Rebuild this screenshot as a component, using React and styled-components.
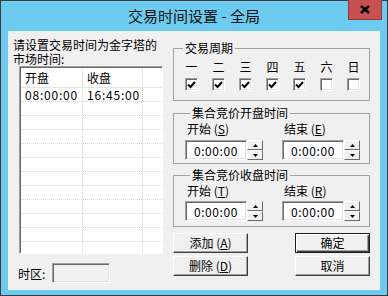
import styled, { createGlobalStyle } from "styled-components";

const GlobalStyle = createGlobalStyle`
  html, body {
    margin: 0;
    padding: 0;
    background: #ffffff;
  }
  body {
    font-family: "Noto Sans CJK SC", "Noto Sans", sans-serif;
    font-size: 12px;
    color: #000;
  }
`;

const Window = styled.div`
  width: 388px;
  height: 296px;
  box-sizing: border-box;
  border: 1px solid #3c3c3c;
  background: #6ccbef;
  display: flex;
  flex-direction: column;
`;

const TitleBar = styled.div`
  height: 30px;
  flex: none;
  display: grid;
  grid-template-columns: 1fr auto 1fr;
  align-items: start;
`;

const Title = styled.div`
  grid-column: 2;
  font-size: 15px;
  line-height: 29px;
  color: #111;
  white-space: nowrap;
`;

const CloseButton = styled.div`
  grid-column: 3;
  justify-self: end;
  width: 34px;
  height: 20px;
  margin: -1px 5px 0 0;
  box-sizing: border-box;
  background: #c75050;
  border: 1px solid #8f3c3c;
  border-top: none;
  display: flex;
  align-items: center;
  justify-content: center;
`;

const Client = styled.div`
  flex: 1;
  margin: 0 7px 5px 7px;
  background: #f0f0f0;
  display: flex;
`;

const LeftColumn = styled.div`
  width: 165px;
  display: flex;
  flex-direction: column;
`;

const Prompt = styled.div`
  margin: 7px 0 0 5px;
  line-height: 14px;
  height: 28px;
`;

const ListView = styled.div`
  margin: 0 0 0 11px;
  width: 144px;
  height: 188px;
  box-sizing: border-box;
  background: #fff;
  border: 1px solid;
  border-color: #a0a0a0 #ffffff #ffffff #a0a0a0;
  box-shadow: inset 1px 1px 0 #696969;
  overflow: hidden;
  padding: 1px 0 0 1px;
`;

const Row = styled.div`
  display: grid;
  grid-template-columns: 62px 60px 1fr;
  height: ${({ $header }) => ($header ? "19px" : "13px")};
  border-bottom: 1px ${({ $header }) => ($header ? "solid #e5e5e5" : "dotted #d6d6d6")};
`;

const Cell = styled.div`
  padding-left: 4px;
  line-height: ${({ $header }) => ($header ? "19px" : "13px")};
  letter-spacing: ${({ $header }) => ($header ? "0" : "0.8px")};
  border-right: 1px ${({ $header }) => ($header ? "solid #e5e5e5" : "dotted #d6d6d6")};
  white-space: nowrap;
  &:last-child {
    border-right: none;
  }
`;

const ZoneRow = styled.div`
  display: flex;
  align-items: center;
  margin: 9px 0 0 10px;
  gap: 7px;
`;

const SunkenBox = styled.div`
  box-sizing: border-box;
  width: ${({ $w }) => $w}px;
  height: 20px;
  background: ${({ $disabled }) => ($disabled ? "#f0f0f0" : "#fff")};
  border: 1px solid;
  border-color: #a0a0a0 #ffffff #ffffff #a0a0a0;
  box-shadow: inset 1px 1px 0 #696969, inset -1px -1px 0 #e3e3e3;
  display: flex;
  align-items: center;
  justify-content: center;
  letter-spacing: 0.6px;
`;

const RightColumn = styled.div`
  width: 197px;
  padding-top: 10px;
  display: flex;
  flex-direction: column;
`;

const Group = styled.fieldset`
  margin: ${({ $gap }) => $gap}px 0 0 0;
  padding: 0 0 0 ${({ $pad }) => $pad}px;
  height: ${({ $h }) => $h}px;
  box-sizing: border-box;
  border: 1px solid #a0a0a0;
  min-width: 0;
`;

const Legend = styled.legend`
  margin-left: 5px;
  padding: 0 2px;
  line-height: 14px;
  font-size: 12px;
`;

const Weekdays = styled.div`
  display: grid;
  grid-template-columns: repeat(7, 27px);
  row-gap: 4px;
  margin-top: 5px;
  justify-items: center;
`;

const DayLabel = styled.span`
  line-height: 14px;
`;

const CheckBox = styled.span`
  box-sizing: border-box;
  width: 13px;
  height: 13px;
  background: #fff;
  border: 1px solid;
  border-color: #a0a0a0 #ffffff #ffffff #a0a0a0;
  box-shadow: inset 1px 1px 0 #696969, inset -1px -1px 0 #e3e3e3;
  display: flex;
  align-items: center;
  justify-content: center;
`;

const TimeGrid = styled.div`
  display: grid;
  grid-template-columns: 97px 97px;
  row-gap: ${({ $gap }) => $gap}px;
`;

const FieldLabel = styled.span`
  line-height: 14px;
  padding-left: 2px;
  white-space: nowrap;
`;

const TimeField = styled.div`
  display: flex;
`;

const Spinner = styled.div`
  display: flex;
  flex-direction: column;
  width: 16px;
  height: 20px;
`;

const SpinHalf = styled.div`
  flex: 1;
  box-sizing: border-box;
  background: #f0f0f0;
  border: 1px solid;
  border-color: #ffffff #696969 #696969 #ffffff;
  display: flex;
  align-items: center;
  justify-content: center;
`;

const ButtonGrid = styled.div`
  display: grid;
  grid-template-columns: 75px 75px;
  justify-content: space-between;
  grid-template-rows: 20px 20px;
  row-gap: 3px;
  margin-top: 6px;
`;

const Button = styled.div`
  box-sizing: border-box;
  background: #f0f0f0;
  border: 1px solid;
  border-color: ${({ $default }) =>
    $default ? "#1e1e1e" : "#ffffff #404040 #404040 #ffffff"};
  box-shadow: ${({ $default }) =>
    $default
      ? "inset 1px 1px 0 #ffffff, inset -1px -1px 0 #404040, inset -2px -2px 0 #a0a0a0"
      : "inset -1px -1px 0 #a0a0a0"};
  display: flex;
  align-items: center;
  justify-content: center;
  line-height: 18px;
  white-space: nowrap;
`;

const Check = () => (
  <svg width="9" height="8" viewBox="0 0 9 8">
    <path d="M1 3.5 L3.5 6 L8 1" fill="none" stroke="#000" strokeWidth="2" />
  </svg>
);

const Arrow = ({ up }) => (
  <svg width="5" height="3" viewBox="0 0 5 3">
    <path d={up ? "M2.5 0 L5 3 L0 3 Z" : "M0 0 L5 0 L2.5 3 Z"} fill="#000" />
  </svg>
);

const Time = ({ label, hot }) => (
  <div>
    <FieldLabel>
      {label} (<u>{hot}</u>)
    </FieldLabel>
  </div>
);

const TimeInput = () => (
  <TimeField>
    <SunkenBox $w={62}>0:00:00</SunkenBox>
    <Spinner>
      <SpinHalf>
        <Arrow up />
      </SpinHalf>
      <SpinHalf>
        <Arrow />
      </SpinHalf>
    </Spinner>
  </TimeField>
);

const days = [
  ["一", true],
  ["二", true],
  ["三", true],
  ["四", true],
  ["五", true],
  ["六", false],
  ["日", false],
];

const emptyRows = Array.from({ length: 12 });

export default function App() {
  return (
    <>
      <GlobalStyle />
      <Window>
        <TitleBar>
          <Title>交易时间设置 - 全局</Title>
          <CloseButton>
            <svg width="10" height="9" viewBox="0 0 10 9">
              <path d="M1 1 L9 8 M9 1 L1 8" stroke="#000" strokeWidth="2.4" />
            </svg>
          </CloseButton>
        </TitleBar>
        <Client>
          <LeftColumn>
            <Prompt>
              请设置交易时间为金字塔的
              <br />
              市场时间:
            </Prompt>
            <ListView>
              <Row $header>
                <Cell $header>开盘</Cell>
                <Cell $header>收盘</Cell>
                <Cell $header />
              </Row>
              <Row>
                <Cell>08:00:00</Cell>
                <Cell>16:45:00</Cell>
                <Cell />
              </Row>
              {emptyRows.map((_, i) => (
                <Row key={i}>
                  <Cell />
                  <Cell />
                  <Cell />
                </Row>
              ))}
            </ListView>
            <ZoneRow>
              <span>时区:</span>
              <SunkenBox $w={58} $disabled />
            </ZoneRow>
          </LeftColumn>
          <RightColumn>
            <Group $gap={0} $pad={4} $h={60}>
              <Legend>交易周期</Legend>
              <Weekdays>
                {days.map(([d]) => (
                  <DayLabel key={d}>{d}</DayLabel>
                ))}
                {days.map(([d, on]) => (
                  <CheckBox key={d}>{on && <Check />}</CheckBox>
                ))}
              </Weekdays>
            </Group>
            <Group $gap={5} $pad={11} $h={58}>
              <Legend>集合竞价开盘时间</Legend>
              <TimeGrid $gap={3}>
                <Time label="开始" hot="S" />
                <Time label="结束" hot="E" />
                <TimeInput />
                <TimeInput />
              </TimeGrid>
            </Group>
            <Group $gap={4} $pad={11} $h={59}>
              <Legend>集合竞价收盘时间</Legend>
              <TimeGrid $gap={2}>
                <Time label="开始" hot="T" />
                <Time label="结束" hot="R" />
                <TimeInput />
                <TimeInput />
              </TimeGrid>
            </Group>
            <ButtonGrid>
              <Button>
                添加 (<u>A</u>)
              </Button>
              <Button $default>确定</Button>
              <Button>
                删除 (<u>D</u>)
              </Button>
              <Button>取消</Button>
            </ButtonGrid>
          </RightColumn>
        </Client>
      </Window>
    </>
  );
}
